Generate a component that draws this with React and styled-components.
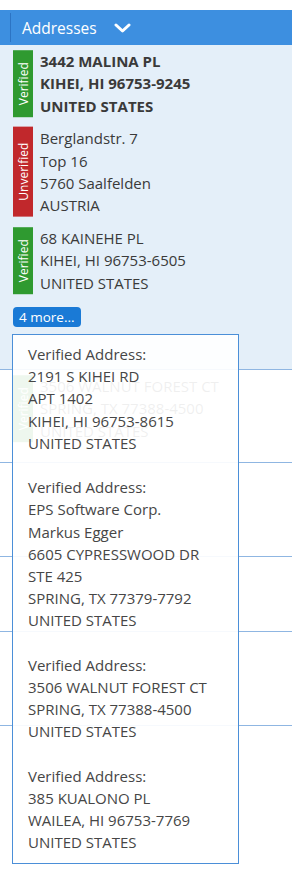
import React from 'react'
import styled, { createGlobalStyle } from 'styled-components'

const GlobalStyle = createGlobalStyle`
  html, body {
    margin: 0;
    padding: 0;
    background: #fff;
    font-family: 'Open Sans', 'Liberation Sans', sans-serif;
  }
`

const Page = styled.div`
  position: relative;
  width: 292px;
  height: 873px;
  overflow: hidden;
  padding-top: 10px;
  box-sizing: border-box;
`

const Header = styled.div`
  height: 35px;
  background: #3d8fe0;
  display: flex;
  align-items: center;
  padding-left: 10px;
`

const HeaderCell = styled.div`
  height: 29px;
  border-left: 1px solid #2c74c4;
  display: flex;
  align-items: center;
  gap: 17px;
  padding-left: 11px;
  color: #fff;
  font-size: 15.5px;
`

const Row = styled.div`
  box-sizing: border-box;
  min-height: ${p => p.h}px;
  background: ${p => (p.active ? '#e4eff9' : '#fff')};
  border-bottom: 1px solid #8fb6e2;
  padding: 5px 0 0 13px;
  display: flex;
  flex-direction: column;
  gap: 10px;
`

const Entry = styled.div`
  display: flex;
  gap: 7px;
  align-items: stretch;
`

const Badge = styled.div`
  width: 20px;
  flex: none;
  background: ${p => (p.verified ? '#2f9a30' : '#c1282c')};
  color: #fff;
  font-size: 12px;
  display: flex;
  align-items: center;
  justify-content: center;
  writing-mode: vertical-rl;
  transform: rotate(180deg);
  white-space: nowrap;
  overflow: hidden;
`

const Lines = styled.div`
  font-size: 15px;
  line-height: 22.4px;
  color: #3a3a3a;
  font-weight: ${p => (p.bold ? 700 : 400)};
  white-space: nowrap;
`

const MoreButton = styled.button`
  align-self: flex-start;
  margin-top: 3px;
  height: 20px;
  padding: 0 6px;
  border: none;
  border-radius: 4px;
  background: #1a7ad6;
  color: #fff;
  font-family: inherit;
  font-size: 13.5px;
  line-height: 20px;
`

const Popup = styled.div`
  position: absolute;
  left: 12px;
  top: 334px;
  width: 227px;
  box-sizing: border-box;
  border: 1.5px solid #4b8fd8;
  background: rgba(255, 255, 255, 0.92);
  padding: 8px 0 9px 15px;
  font-size: 15px;
  line-height: 22.2px;
  color: #464646;
`

const Group = styled.div`
  & + & {
    margin-top: 22.2px;
  }
`

const Chevron = () => (
  <svg width='17' height='10' viewBox='0 0 17 10'>
    <polyline points='2,2 8.5,8 15,2' fill='none' stroke='#fff' strokeWidth='3' strokeLinecap='round' strokeLinejoin='round' />
  </svg>
)

const addresses = [
  { verified: true, bold: true, lines: ['3442 MALINA PL', 'KIHEI, HI 96753-9245', 'UNITED STATES'] },
  { verified: false, lines: ['Berglandstr. 7', 'Top 16', '5760 Saalfelden', 'AUSTRIA'] },
  { verified: true, lines: ['68 KAINEHE PL', 'KIHEI, HI 96753-6505', 'UNITED STATES'] }
]

const more = [
  ['2191 S KIHEI RD', 'APT 1402', 'KIHEI, HI 96753-8615', 'UNITED STATES'],
  ['EPS Software Corp.', 'Markus Egger', '6605 CYPRESSWOOD DR', 'STE 425', 'SPRING, TX 77379-7792', 'UNITED STATES'],
  ['3506 WALNUT FOREST CT', 'SPRING, TX 77388-4500', 'UNITED STATES'],
  ['385 KUALONO PL', 'WAILEA, HI 96753-7769', 'UNITED STATES']
]

const AddressEntry = ({ verified, bold, lines }) => (
  <Entry>
    <Badge verified={verified}>{verified ? 'Verified' : 'Unverified'}</Badge>
    <Lines bold={bold}>
      {lines.map(l => <div key={l}>{l}</div>)}
    </Lines>
  </Entry>
)

export default function App () {
  return (
    <Page>
      <GlobalStyle />
      <Header>
        <HeaderCell>
          Addresses
          <Chevron />
        </HeaderCell>
      </Header>
      <Row active h={325}>
        {addresses.map((a, i) => <AddressEntry key={i} {...a} />)}
        <MoreButton>4 more...</MoreButton>
      </Row>
      <Row h={93}>
        <AddressEntry verified lines={['3506 WALNUT FOREST CT', 'SPRING, TX 77388-4500', 'UNITED STATES']} />
      </Row>
      <Row h={94} />
      <Row h={75} />
      <Row h={94} />
      <Popup>
        {more.map((g, i) => (
          <Group key={i}>
            <div>Verified Address:</div>
            {g.map(l => <div key={l}>{l}</div>)}
          </Group>
        ))}
      </Popup>
    </Page>
  )
}
